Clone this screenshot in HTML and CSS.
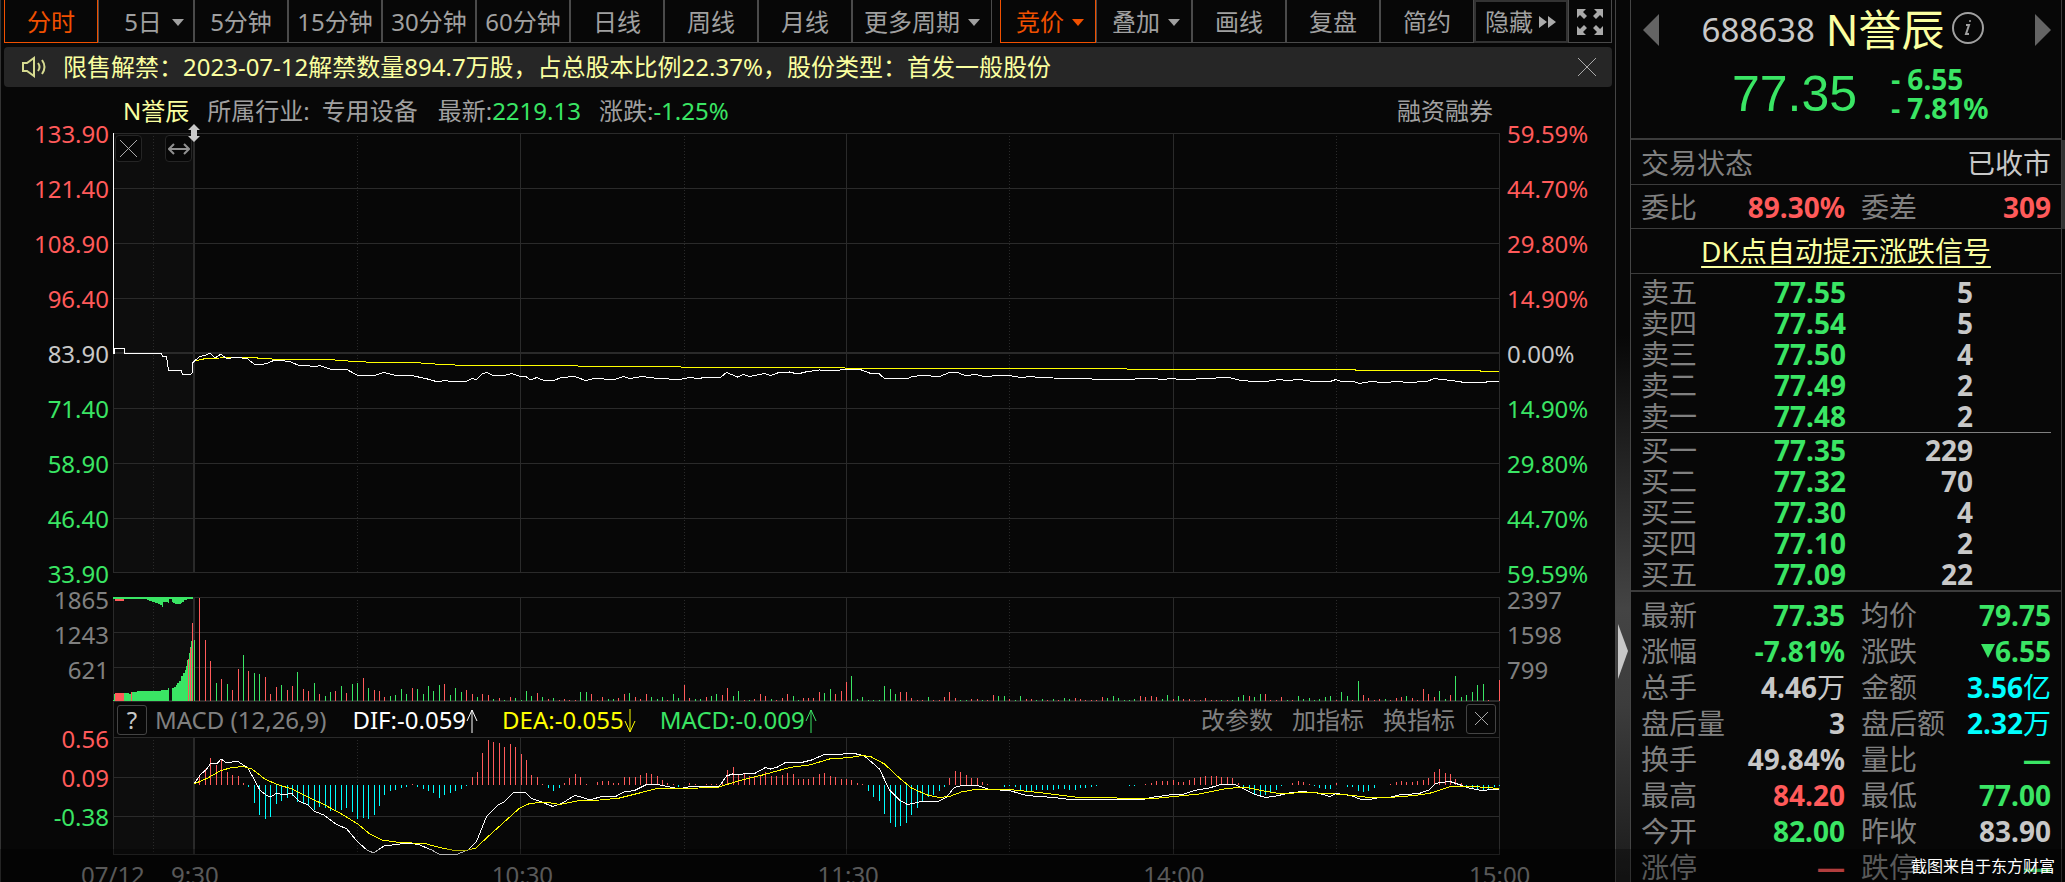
FILE: index.html
```html
<!DOCTYPE html>
<html lang="zh-CN">
<head>
<meta charset="utf-8">
<title>N誉辰 688638</title>
<link rel="stylesheet" href="styles.css">
</head>
<body>
<div class="app">
  <main class="main">
    <nav class="toolbar">
      <button class="tab active">分时</button>
      <button class="tab days">5日<i class="caret"></i></button>
      <button class="tab">5分钟</button>
      <button class="tab">15分钟</button>
      <button class="tab">30分钟</button>
      <button class="tab">60分钟</button>
      <button class="tab">日线</button>
      <button class="tab">周线</button>
      <button class="tab">月线</button>
      <button class="tab">更多周期<i class="caret"></i></button>
      <span></span>
      <button class="tab menu active">竞价<i class="caret"></i></button>
      <button class="tab menu">叠加<i class="caret"></i></button>
      <button class="tab">画线</button>
      <button class="tab">复盘</button>
      <button class="tab">简约</button>
      <button class="tab tight">隐藏<svg class="ff" viewBox="0 0 18 14"><path d="M0 1l8 6-8 6zM9 1l8 6-8 6z"/></svg></button>
      <button class="tab" aria-label="全屏"><svg class="full" viewBox="0 0 28 28"><path d="M1 1h9l-3 3 4 4-3 3-4-4-3 3zM27 1h-9l3 3-4 4 3 3 4-4 3 3zM1 27h9l-3-3 4-4-3-3-4 4-3-3zM27 27h-9l3-3-4-4 3-3 4 4 3-3z"/></svg></button>
    </nav>

    <div class="notice">
      <svg class="horn" viewBox="0 0 26 22"><path d="M2 7h4l7-5v18l-7-5H2z"/><path d="M17 7q3 4 0 8M21 4q5 7 0 14"/></svg>
      <p class="notice-text">限售解禁：2023-07-12解禁数量894.7万股，占总股本比例22.37%，股份类型：首发一般股份</p>
      <button class="bare" aria-label="关闭"><svg class="x-lg" viewBox="0 0 18 18"><path d="M0 0L18 18M18 0L0 18"/></svg></button>
    </div>

    <div class="info">
      <span class="yellow">N誉辰</span>
      <span class="industry">所属行业:</span>
      <span class="sector">专用设备</span>
      <span class="latest">最新:<b class="green">2219.13</b></span>
      <span class="change">涨跌:<b class="green">-1.25%</b></span>
      <span class="margin">融资融券</span>
    </div>

    <section class="charts">
      <div class="axis left price-axis">
        <span class="red">133.90</span><span class="red">121.40</span><span class="red">108.90</span><span class="red">96.40</span><span class="light">83.90</span><span class="green">71.40</span><span class="green">58.90</span><span class="green">46.40</span><span class="green">33.90</span>
      </div>
      <div class="plot price">
        <svg id="price" viewBox="113 133 1388 440" preserveAspectRatio="none"></svg>
        <button class="mini close" aria-label="关闭竞价"><svg class="x-sm" viewBox="0 0 17 17"><path d="M0 0L17 17M17 0L0 17"/></svg></button>
        <button class="mini stretch" aria-label="调整宽度"><svg class="arrows-h" viewBox="0 0 22 12"><path d="M1 6H21M6 1L1 6l5 5M16 1l5 5-5 5"/></svg></button>
        <svg class="grip" viewBox="0 0 12 18"><path d="M6 0l6 6h-3v6h3l-6 6-6-6h3V6H0z"/></svg>
      </div>
      <div class="axis price-axis">
        <span class="red">59.59%</span><span class="red">44.70%</span><span class="red">29.80%</span><span class="red">14.90%</span><span class="light">0.00%</span><span class="green">14.90%</span><span class="green">29.80%</span><span class="green">44.70%</span><span class="green">59.59%</span>
      </div>

      <div class="axis left volume-axis"><span>1865</span><span>1243</span><span>621</span></div>
      <div class="plot volume"><svg id="volume" viewBox="113 597 1388 105" preserveAspectRatio="none"></svg></div>
      <div class="axis volume-axis"><span>2397</span><span>1598</span><span>799</span></div>

      <div class="indicator">
        <button class="square help">?</button>
        <span class="macd-name">MACD (12,26,9)</span>
        <span class="white dif">DIF:-0.059<svg class="arrow" viewBox="0 0 12 24"><path d="M6 24V1M1 12L6 1l5 11"/></svg></span>
        <span class="pure-yellow dea">DEA:-0.055<svg class="arrow" viewBox="0 0 12 24"><path d="M6 0V23M1 12l5 11 5-11"/></svg></span>
        <span class="green macd-value">MACD:-0.009<svg class="arrow" viewBox="0 0 12 24"><path d="M6 24V1M1 12L6 1l5 11"/></svg></span>
        <span class="actions">
          <button class="bare">改参数</button>
          <button class="bare">加指标</button>
          <button class="bare">换指标</button>
          <button class="square" aria-label="关闭指标"><svg class="x-xs" viewBox="0 0 13 13"><path d="M0 0L13 13M13 0L0 13"/></svg></button>
        </span>
      </div>

      <div class="axis left macd-axis"><span class="red">0.56</span><span class="red">0.09</span><span class="green">-0.38</span></div>
      <div class="plot macd"><svg id="macd" viewBox="113 737 1388 118" preserveAspectRatio="none"></svg></div>
    </section>

    <div class="times">
      <span class="date">07/12</span><span class="open">9:30</span><span>10:30</span><span>11:30</span><span>14:00</span><span class="end">15:00</span>
    </div>
  </main>

  <div class="splitter"><svg class="splitter-arrow" viewBox="0 0 10 55"><path d="M0 0L10 27 0 55z"/></svg></div>

  <aside class="quote">
    <header class="head">
      <div class="title">
        <button class="bare" aria-label="上一只"><svg class="tri" viewBox="0 0 16 32"><path d="M16 0v32L0 16z"/></svg></button>
        <h1 class="name"><span class="code">688638</span>N誉辰<svg class="about" viewBox="0 0 32 32"><circle cx="16" cy="16" r="15"/><path d="M14 13h3l-3 9h3"/><circle class="dot" cx="18" cy="9" r="1"/></svg></h1>
        <button class="bare" aria-label="下一只"><svg class="tri" viewBox="0 0 16 32"><path d="M0 0v32l16-16z"/></svg></button>
      </div>
      <div class="big green">
        <span class="last">77.35</span>
        <span class="deltas"><span>- 6.55</span><span>- 7.81%</span></span>
      </div>
    </header>
    <div class="row status"><span>交易状态</span><span class="light">已收市</span></div>
    <div class="row pair">
      <div class="item"><span>委比</span><b class="red">89.30%</b></div>
      <div class="item"><span>委差</span><b class="red">309</b></div>
    </div>
    <div class="row signal"><a href="#">DK点自动提示涨跌信号</a></div>
    <div class="book">
      <table class="sell">
        <tr><th>卖五</th><td>77.55</td><td class="qty">5</td><td></td></tr>
        <tr><th>卖四</th><td>77.54</td><td class="qty">5</td><td></td></tr>
        <tr><th>卖三</th><td>77.50</td><td class="qty">4</td><td></td></tr>
        <tr><th>卖二</th><td>77.49</td><td class="qty">2</td><td></td></tr>
        <tr><th>卖一</th><td>77.48</td><td class="qty">2</td><td></td></tr>
      </table>
      <table>
        <tr><th>买一</th><td>77.35</td><td class="qty">229</td><td></td></tr>
        <tr><th>买二</th><td>77.32</td><td class="qty">70</td><td></td></tr>
        <tr><th>买三</th><td>77.30</td><td class="qty">4</td><td></td></tr>
        <tr><th>买四</th><td>77.10</td><td class="qty">2</td><td></td></tr>
        <tr><th>买五</th><td>77.09</td><td class="qty">22</td><td></td></tr>
      </table>
    </div>
    <div class="stats pair">
      <div class="item"><span>最新</span><b class="green">77.35</b></div>
      <div class="item"><span>均价</span><b class="green">79.75</b></div>
      <div class="item"><span>涨幅</span><b class="green">-7.81%</b></div>
      <div class="item"><span>涨跌</span><b class="green"><svg class="down" viewBox="0 0 14 14"><path d="M0 0h14L7 14z"/></svg>6.55</b></div>
      <div class="item"><span>总手</span><b class="light">4.46<i>万</i></b></div>
      <div class="item"><span>金额</span><b class="cyan">3.56<i>亿</i></b></div>
      <div class="item"><span>盘后量</span><b class="light">3</b></div>
      <div class="item"><span>盘后额</span><b class="cyan">2.32<i>万</i></b></div>
      <div class="item"><span>换手</span><b class="light">49.84%</b></div>
      <div class="item"><span>量比</span><b class="green">—</b></div>
      <div class="item"><span>最高</span><b class="red">84.20</b></div>
      <div class="item"><span>最低</span><b class="green">77.00</b></div>
      <div class="item"><span>今开</span><b class="green">82.00</b></div>
      <div class="item"><span>昨收</span><b class="light">83.90</b></div>
      <div class="item"><span>涨停</span><b class="red">—</b></div>
      <div class="item"><span>跌停</span><b class="green">—</b></div>
    </div>
  </aside>
  <div class="edge"><div class="thumb"></div></div>
</div>
<footer class="credit">截图来自于东方财富</footer>
<script src="charts.js"></script>
</body>
</html>
```

FILE: styles.css
```css
* { box-sizing: border-box; }
html, body { margin: 0; height: 100%; background: #070707; }
body {
  position: relative;
  overflow: hidden;
  color: #a0a0a0;
  font: 400 24px/32px "Noto Sans", "Noto Sans CJK SC", sans-serif;
}
button {
  font: inherit;
  color: inherit;
  background: none;
  border: 0;
  margin: 0;
  padding: 0;
  white-space: nowrap;
}
b, i { font-weight: inherit; font-style: normal; }
svg { display: block; fill: none; }
.app { display: flex; height: 100%; }

.red { color: #ff5a5a; }
.green { color: #3ae564; }
.light { color: #c8c8c8; }
.white { color: #fff; }
.cyan { color: #0ff; }
.yellow { color: #faffa0; }
.pure-yellow { color: #ff0; }

/* main column */
.main { flex: 1; min-width: 0; border-left: 1px solid #333; }

.toolbar {
  display: grid;
  grid-template-columns: 94fr 96fr repeat(7, 94fr) 140fr 8fr 96fr 96fr repeat(4, 94fr) 44fr;
  height: 43px;
  padding: 0 3px;
}
.tab {
  display: flex;
  align-items: center;
  justify-content: center;
  gap: 8px;
  min-width: 0;
  padding-top: 2px;
  border: 1px solid #4a4a4a;
  border-top: 0;
}
.tab.menu { padding-left: 4px; }
.tab.days { gap: 10px; padding-left: 16px; }
.tab.tight { gap: 6px; padding-top: 0; border: 2px solid #333; }
.tab.active { color: #f05000; border-color: #f05000; }
.caret {
  border: 6px solid transparent;
  border-top: 7px solid currentColor;
  border-bottom: 0;
}
.ff { width: 18px; height: 14px; fill: #aaa; }
.full { width: 28px; height: 28px; fill: #aaa; }

.notice {
  display: flex;
  align-items: center;
  height: 40px;
  margin: 4px 3px 0 3px;
  padding: 0 16px 0 17px;
  background: #262626;
  border-radius: 4px;
  color: #faffa0;
}
.notice-text { flex: 1; margin: 0 0 0 16px; white-space: nowrap; }
.horn { width: 26px; height: 22px; stroke: #d6da90; stroke-width: 2; }
.x-lg, .x-sm, .x-xs { stroke: #aaa; stroke-width: 1; }
.x-lg { width: 18px; height: 18px; }
.x-sm { width: 17px; height: 17px; }
.x-xs { width: 13px; height: 13px; }

.info { display: flex; height: 46px; padding: 8px 122px 0 122px; white-space: nowrap; }
.industry { margin-left: 18px; }
.sector { margin-left: 12px; }
.latest { margin-left: 20px; }
.change { margin-left: 18px; }
.margin { margin-left: auto; }

.charts { display: grid; grid-template-columns: 112px 1fr 115px; }
.axis { display: flex; flex-direction: column; padding-left: 7px; color: #808080; line-height: 32px; }
.axis.left { grid-column: 1; padding: 0 4px 0 0; text-align: right; }
.price-axis { justify-content: space-between; margin: -15px 0 7px; }
.volume-axis { margin-top: -15px; line-height: 35px; }
.macd-axis { margin-top: -18px; line-height: 39px; }
.plot { position: relative; }
.plot > svg:first-child { width: 100%; height: 100%; }
.price { height: 440px; margin-bottom: 24px; }
.volume { height: 105px; }
.macd { height: 118px; }
.mini {
  position: absolute;
  top: 2px;
  display: flex;
  align-items: center;
  justify-content: center;
  width: 27px;
  height: 27px;
  border: 1px solid #252525;
  border-radius: 4px;
  background: #070707;
}
.close { left: 2px; }
.stretch { left: 52px; }
.arrows-h { width: 22px; height: 12px; stroke: #909090; stroke-width: 2; }
.grip { position: absolute; left: 75px; top: -9px; width: 12px; height: 18px; fill: #c8c8c8; }

.indicator {
  grid-column: 2;
  display: flex;
  align-items: center;
  height: 35px;
  padding: 0 3px;
  border: 1px solid #2a2a2a;
  border-width: 0 1px;
  white-space: nowrap;
}
.square {
  display: flex;
  align-items: center;
  justify-content: center;
  width: 30px;
  height: 30px;
  border: 1px solid #444;
  border-radius: 3px;
}
.help { color: #c8c8c8; }
.macd-name { margin-left: 8px; color: #808080; }
.dif { margin-left: 26px; }
.dea, .macd-value { margin-left: 24px; }
.arrow { display: inline-block; width: 12px; height: 24px; stroke: currentColor; vertical-align: -4px; }
.actions { display: flex; gap: 19px; margin-left: auto; color: #808080; }
.actions .square { margin-left: -8px; }

.times { display: flex; height: 36px; padding: 4px 0 0 0; color: #808080; }
.times span { flex: 326 1 0; }
.times .date { flex: 0 0 90px; margin-left: 80px; }
.times .open { flex-grow: 321; }
.times .end { flex: 0 0 146px; }

.splitter {
  width: 16px;
  padding: 624px 0 0 2px;
  border: 1px solid #444;
  border-width: 0 1px;
  background: linear-gradient(#070707 38%, #444 69%, #3c3c3c 80%, #1a1a1a);
}
.splitter-arrow { width: 10px; height: 55px; fill: #c8c8c8; }

/* quote panel */
.quote { width: 431px; border-right: 1px solid #3c3c3c; font-size: 28px; color: #808080; }
.quote b { font-weight: 700; }
.head { height: 140px; padding: 2px 10px 0 12px; border-bottom: 2px solid #3c3c3c; }
.title { display: flex; align-items: center; justify-content: space-between; height: 56px; }
.tri { width: 16px; height: 32px; fill: #646464; }
.name {
  display: flex;
  align-items: center;
  margin: 0 8px 0 0;
  color: #faffa0;
  font-size: 43px;
  font-weight: 400;
  line-height: 56px;
}
.code { margin-right: 11px; color: #c8c8c8; font-size: 33px; }
.about { width: 32px; height: 32px; margin: -4px 0 0 8px; stroke: #a0a0a0; stroke-width: 2; }
.dot { fill: #a0a0a0; stroke: none; }
.big { display: flex; align-items: center; height: 72px; padding-left: 89px; }
.last { font: 400 50px/60px "Liberation Sans", sans-serif; }
.deltas { display: flex; flex-direction: column; margin-left: 34px; font-weight: 700; line-height: 29px; }

.row {
  display: flex;
  align-items: center;
  justify-content: space-between;
  height: 44px;
  padding: 0 10px;
  border-bottom: 1px solid #3c3c3c;
}
.row.status { height: 45px; padding-top: 2px; }
.row.pair { display: grid; }
.pair { display: grid; grid-template-columns: 204fr 190fr; column-gap: 16px; }
.item { display: flex; justify-content: space-between; align-items: center; height: 36px; white-space: nowrap; }
.row.signal { height: 45px; justify-content: center; }
.signal a { color: #faffa0; text-underline-offset: 4px; text-decoration-thickness: 2px; text-decoration-skip-ink: none; }

.book { padding: 3px 10px 0; border-bottom: 2px solid #3c3c3c; }
.book table { width: 100%; table-layout: fixed; border-collapse: collapse; }
.book .sell { border-bottom: 1px solid #808080; margin-bottom: 2px; }
.book tr { height: 31px; }
.book th, .book td { width: 29%; padding: 0; line-height: 31px; text-align: right; font-weight: 700; color: #3ae564; }
.book th { width: 21%; text-align: left; font-weight: 400; color: #808080; }
.book td.qty { width: 31%; color: #c8c8c8; }
.book td:last-child { width: 19%; }

.stats { padding: 5px 10px 0; }
.stats i { font-weight: 400; }
.stats svg { display: inline-block; width: 14px; height: 14px; fill: currentColor; vertical-align: 4px; }

.edge { flex: 1 0 3px; max-width: 3px; padding-top: 140px; }
.thumb { height: 89px; background: #333; }

.credit {
  position: absolute;
  left: 0;
  right: 0;
  bottom: 0;
  height: 33px;
  padding-right: 10px;
  background: rgba(0, 0, 0, .3);
  color: #fff;
  font-size: 16px;
  line-height: 34px;
  text-align: right;
}

/* chart marks */
svg path, svg polyline, svg line { vector-effect: non-scaling-stroke; }
.grid-line { stroke: #2a2a2a; shape-rendering: crispEdges; }
.thick { stroke-width: 2; }
.dotted { stroke-dasharray: 1 2; }
.auction { fill: #0d0d0d; }
.bar { shape-rendering: crispEdges; }
.up { stroke: #ff5a5a; }
.dn { stroke: #3ae564; }
.neg { stroke: #0ff; }
.up-fill { fill: #ff5a5a; shape-rendering: crispEdges; }
.dn-fill { fill: #3ae564; shape-rendering: crispEdges; }
.line-white { stroke: #fff; }
.line-yellow { stroke: #ff0; }
.line-white, .line-yellow { stroke-width: 1; shape-rendering: crispEdges; }
```

FILE: charts.js
```js
const LEFT = 113, RIGHT = 1500, OPEN = 194, STEP = (RIGHT - OPEN) / 240;

// one entry per minute: r = up, g = down, then bar height
const volumes = `g61 r103 r61 r40 g18 r22 g17 r11 r32 g46 r30 g28 g27 r24 r7 r14 g16 r11 r15 g29
r12 r10 g18 r7 g5 g9 r10 g15 r8 g17 g18 r23 g13 r11 r10 r4 g5 g6 g12 g7
r13 g12 g7 g15 g10 g16 r17 g6 g13 g9 r11 r7 g4 r7 r6 g2 r3 g1 r4 g3
g1 g10 g5 r8 g4 r2 g3 r1 r2 r1 r1 g9 g9 r7 r1 r4 g2 g2 r3 r7
g8 r4 r2 r7 g4 g2 g4 r1 g7 g3 r16 r3 g2 g2 r4 g5 g7 r6 r13 g5
g10 r1 g1 r2 r7 r5 g2 r1 r3 r7 g5 g1 r3 r3 r3 r9 g8 g12 r7 r10
r19 g25 g2 g4 g1 g1 g1 g15 g12 g7 r9 r9 r3 r1 r1 g4 r1 r1 r4 r9
r3 g1 g1 r2 r2 g1 r1 r6 g5 g5 r2 g1 g5 r2 r2 g1 g2 r1 g2 r1
g3 g2 r3 r2 r1 r1 r1 r4 g3 g5 g3 g1 g1 g2 r5 r4 r5 r4 g2 g6
r2 g5 r2 r2 r1 r1 r3 r1 r1 g1 r1 g1 g4 g6 r5 g4 g7 r7 r1 r1
r4 g1 r1 g5 g2 g3 g1 g2 g4 g5 r1 g9 g5 r1 g20 r6 r3 r1 r2 g2
r1 r3 r4 g5 r3 r1 r12 r7 r4 g10 g2 r6 g25 g4 g6 g9 g16 g17 r1 r0
r21`.split(/\s+/);

const histogram = `0 10 16 27 20 26 13 10 9 2 -2 -18 -30 -34 -32 -19 -16 -13 -11 -17
-19 -20 -25 -22 -23 -26 -26 -25 -23 -27 -34 -33 -34 -30 -21 -10 -6 -5 -3 -2
1 -2 -4 -6 -8 -13 -10 -8 -6 -4 -1 8 13 32 45 43 42 38 41 38
31 25 10 8 1 -3 -6 -3 2 7 11 8 1 0 3 4 4 2 2 8
8 8 10 12 11 9 5 2 1 -2 0 2 1 0 1 1 1 2 15 18
10 12 9 8 9 13 9 9 10 12 11 6 6 6 8 11 12 9 8 6
6 5 2 1 -6 -12 -16 -29 -38 -42 -41 -38 -30 -23 -17 -12 -10 -6 -2 7
14 13 10 7 7 3 1 0 0 -2 -1 -2 -6 -7 -6 -5 -5 -5 -5 -4
-4 -5 -5 -3 -3 -2 -1 0 0 0 0 0 -1 -1 0 1 2 4 4 4
5 3 3 5 7 8 9 9 9 8 8 7 2 -4 -5 -9 -10 -10 -7 -5
-1 0 2 4 3 1 -1 -3 -4 -4 2 0 -2 -2 -6 -7 -6 -3 0 0
1 3 4 3 3 4 5 7 13 16 12 11 6 2 -1 -3 -5 -6 -4 -2
-1`.split(/\s+/).map(Number);

const auctionLine = '113.5,133 113.5,353.5 114.5,353.5 114.5,348.5 124.5,348.5 124.5,353.5 161.5,353.5 162.5,356.5 166.5,356.5 168.5,370.5 181.5,370.5 182.5,374.5 190.5,374.5 192.5,372.5 192.5,362.5 194.5,361.5';
const priceLine = '194,361.5 199,357 206,355 210,353 215,358 221,354 227,359 236,357 248,359 254,364 260,365 268,363 275,360 290,361.5 298,365 310,366 314,367 320,365.5 330,369 347,369.5 357,375 376,375 384,372.5 396,375.5 412,375.5 430,379.5 438,382 445,380.5 452,381.5 466,381.5 472,378.5 477,379.5 482,374 487,372.5 494,376 504,375.5 512,373.5 519,376 526,376.5 531,380 537,377.5 543,380 555,380 562,377.5 575,376.5 586,380.5 594,378.5 615,379.5 624,376.5 630,378.5 643,376.5 658,378.5 680,379.5 690,377.5 698,378.5 706,377.5 720,378 727,372.5 738,377 744,374.5 750,376.5 765,373.5 771,375.5 778,373 790,372 798,374 806,372 820,370 832,371 845,369.5 862,370 870,373 880,374 885,378.5 908,378.5 913,376.5 922,375.5 940,376.5 950,372.5 958,372.5 966,375.5 977,374.5 985,376.5 1000,375.5 1010,375.5 1022,377.5 1032,376.5 1040,377.5 1068,378.5 1117,379.5 1155,378.5 1162,379.5 1173,378.5 1180,379.5 1214,378.5 1220,377.5 1230,377.5 1240,380 1253,381.5 1270,381 1281,379.5 1287,380.5 1300,379.5 1314,381.5 1331,381.5 1337,379.5 1342,381.5 1355,381.5 1360,383.5 1372,381.5 1384,382.5 1400,381.5 1408,382.5 1428,381.5 1435,378.5 1452,380.5 1466,382.5 1485,382.5 1490,381.5 1500,381.5';
const averageLine = '194,361 206,358.5 234,357.5 250,357.5 280,359.5 328,359.5 355,361.5 377,362.5 414,362.5 442,364.5 469,365.5 578,365.5 579,366.5 681,366.5 682,367.5 845,367.5 846,368.5 1127,368.5 1128,369.5 1356,369.5 1357,370.5 1481,370.5 1482,371.5 1500,371.5';
const difLine = '194,784 201,774 206,770 211,763 217,764 221,759 226,762.5 238,761.5 248,768 254,779 260,790 266,795 271,797 276,793.5 285,794.5 292,793.5 299,801 308,805 314,811 324,815 336,824 347,829 357,841 367,850 374,853 384,846 400,844 410,843 420,845 432,850 439,854 458,854 468,850 477,841 487,816 498,805 504,802 513,793 525,792 532,798.5 542,802 553,806.5 562,803.5 575,795.5 583,797.5 590,800 602,796.5 615,797 624,792 635,790.5 647,784.5 660,785 680,789 690,786.5 720,786 727,776 733,774 740,775 745,773.5 755,773.5 766,767.5 771,769 778,767 786,762.5 800,763 812,760 825,754.5 840,754.5 848,753.5 855,753.5 865,756 872,762 880,769 890,790 900,800 908,804.5 920,802 940,801 947,797 955,787.5 962,785.5 980,786 990,789.5 1010,790.5 1027,795.5 1055,797.5 1070,799.5 1143,799.5 1155,797 1170,795 1185,794 1195,790.5 1210,788 1220,785 1235,784 1245,789 1255,794 1266,797.5 1277,796 1290,793 1303,791.5 1318,793 1331,796.5 1337,793.5 1352,795.5 1362,799.5 1373,799 1380,797.5 1392,797 1400,795 1420,793.5 1430,790 1436,784 1441,782.5 1451,781.5 1460,784.5 1470,788 1482,790.5 1500,789';
const deaLine = '194,784 208,778 220,771 230,768 243,766.5 252,769 265,779 276,784 292,789 308,797 325,805 340,813 358,824 370,834 382,840 400,842.5 425,843.5 440,847.5 455,850.5 468,850 476,848 490,835 510,817 520,808 530,803.5 545,802 560,804.5 580,800.5 600,800 620,798 640,793 655,789 680,788.5 718,787.5 740,780.5 765,774.5 790,767.5 810,765 830,759 850,757.5 863,755.5 872,757 885,764 900,778 912,788 928,795 940,797.5 950,796.5 962,792 975,789.5 1010,789.5 1035,792 1060,795 1080,797.5 1155,798.5 1175,796.5 1200,794 1225,789 1238,787.5 1250,788 1265,791 1280,793.5 1310,792.5 1345,794.5 1370,797.5 1390,797.5 1415,795.5 1430,793.5 1450,787 1475,786.5 1500,788.5';

const hline = (y, cls = '') => `<path class="grid-line ${cls}" d="M${LEFT} ${y}H${RIGHT + 1}"/>`;
const vline = (x, top, bottom, cls = '') => `<path class="grid-line ${cls}" d="M${x} ${top}V${bottom}"/>`;
const poly = (points, cls) => `<polyline class="${cls}" points="${points}"/>`;

function grid(top, bottom, rows) {
  return `<rect class="auction" x="${LEFT}" y="${top}" width="81" height="${bottom - top}"/>`
    + rows.map(y => hline(y)).join('')
    + [113.5, 520.5, 847.5, 1174.5, 1500.5].map(x => vline(x, top, bottom)).join('')
    + [153.5, 357.5, 684.5, 1010.5, 1337.5].map(x => vline(x, top, bottom, 'dotted')).join('')
    + vline(194, top, bottom, 'thick');
}

function bars(values, zero, colours) {
  const d = { up: '', dn: '', neg: '' };
  values.forEach((h, i) => {
    if (h) d[colours[i]] += `M${Math.round(OPEN + i * STEP) + 0.5} ${zero}V${zero - h}`;
  });
  return Object.entries(d).map(([k, path]) => `<path class="bar ${k}" d="${path}"/>`).join('');
}

document.getElementById('price').innerHTML =
  grid(133, 573, [133.5, 188.5, 243.5, 298.5, 408.5, 463.5, 518.5, 572.5])
  + hline(353, 'thick')
  + poly(averageLine, 'line-yellow')
  + poly(auctionLine, 'line-white')
  + poly(priceLine, 'line-white');

const auctionVolume =
  '<path class="dn-fill" d="M113 701V700H114V694H120V693H129V694H131V692H137V691H161V690H168V688H169V701ZM172 701V688H174V687H176V685H177V683H179V681H181V676H183V673H185V670H186V666H187V660H189V653H190V647H191V641H193V701Z'
  + 'M113 597V599H147V600H149V601H152V602H155V603H158V604H160V605H162V607H163V602H168V603H169V599H172V602H173V603H175V604H181V603H182V602H184V600H187V599H193V597Z"/>'
  + '<path class="up-fill" d="M115 701V693H124V701ZM131 701V692H132V701ZM188 701V659H189V701ZM190 701V648H191V701ZM192 701V623H193V701ZM115 599V601H124V599Z"/>';

document.getElementById('volume').innerHTML =
  grid(597, 702, [597.5, 632.5, 667.5])
  + hline(701, 'thick')
  + auctionVolume
  + bars(volumes.map(v => +v.slice(1)), 701, volumes.map(v => v[0] === 'r' ? 'up' : 'dn'));

document.getElementById('macd').innerHTML =
  grid(737, 855, [737.5, 777.5, 816.5, 854.5])
  + bars(histogram, 784.5, histogram.map(h => h > 0 ? 'up' : 'neg'))
  + poly(difLine, 'line-white')
  + poly(deaLine, 'line-yellow');
```
